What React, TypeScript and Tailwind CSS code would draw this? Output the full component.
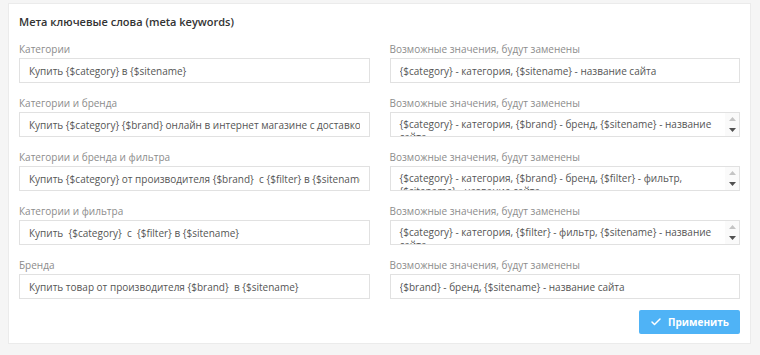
import React from 'react';
import { Check } from 'lucide-react';

type Row = {
  label: string;
  value: string;
  hint: string;
  multi?: boolean;
};

const rows: Row[] = [
  {
    label: 'Категории',
    value: 'Купить {$category} в {$sitename}',
    hint: '{$category} - категория, {$sitename} - название сайта',
  },
  {
    label: 'Категории и бренда',
    value: 'Купить {$category} {$brand} онлайн в интернет магазине с доставкой по {$sitename}',
    hint: '{$category} - категория, {$brand} - бренд, {$sitename} - название сайта',
    multi: true,
  },
  {
    label: 'Категории и бренда и фильтра',
    value: 'Купить {$category} от производителя {$brand}  с {$filter} в {$sitename}',
    hint: '{$category} - категория, {$brand} - бренд, {$filter} - фильтр, {$sitename} - название сайта',
    multi: true,
  },
  {
    label: 'Категории и фильтра',
    value: 'Купить  {$category}  с  {$filter} в {$sitename}',
    hint: '{$category} - категория, {$filter} - фильтр, {$sitename} - название сайта',
    multi: true,
  },
  {
    label: 'Бренда',
    value: 'Купить товар от производителя {$brand}  в {$sitename}',
    hint: '{$brand} - бренд, {$sitename} - название сайта',
  },
];

const HintField = ({ text, multi }: { text: string; multi?: boolean }) => {
  if (!multi) {
    return (
      <input
        readOnly
        value={text}
        className="block w-full h-[25px] px-[9px] border border-[#e1e1e1] bg-white text-[10px] text-[#555] outline-none"
      />
    );
  }
  return (
    <div className="relative h-[25px] border border-[#e1e1e1] bg-white overflow-hidden">
      <textarea
        readOnly
        value={text}
        className="block w-full h-full resize-none overflow-hidden pl-[9px] pr-[22px] pt-[5px] text-[10px] leading-[13px] text-[#555] outline-none bg-transparent"
      />
      {/* fake scrollbar arrows */}
      <div className="absolute right-0 top-0 bottom-0 w-[14px] bg-[#fafafa] flex flex-col items-center justify-between py-[4px]">
        <svg width="7" height="4" viewBox="0 0 7 4"><path d="M0 4 L3.5 0 L7 4 Z" fill="#c4c4c4" /></svg>
        <svg width="7" height="4" viewBox="0 0 7 4"><path d="M0 0 L3.5 4 L7 0 Z" fill="#505050" /></svg>
      </div>
    </div>
  );
};

const App = () => {
  return (
    <div className="w-[760px] h-[355px] bg-[#f5f5f5] pt-[3px] pl-[8px]" style={{ fontFamily: '"Open Sans", sans-serif' }}>
      <div className="w-[743px] h-[341px] bg-white border border-[#ebebeb] px-[10px] pt-[9px]">
        <h3 className="text-[11px] leading-[18px] font-semibold text-[#333] mb-[10px]">Мета ключевые слова (meta keywords)</h3>

        <div className="grid grid-cols-2 gap-x-[20px]">
          {rows.map((r) => (
            <React.Fragment key={r.label}>
              <div className="mb-[12px]">
                <label className="block text-[10px] leading-[16px] text-[#8c8c8c] mb-[1px]">{r.label}</label>
                <input
                  readOnly
                  value={r.value}
                  className="block w-full h-[25px] px-[9px] border border-[#e1e1e1] bg-white text-[10px] text-[#555] outline-none"
                />
              </div>
              <div className="mb-[12px]">
                <label className="block text-[10px] leading-[16px] text-[#8c8c8c] mb-[1px]">Возможные значения, будут заменены</label>
                <HintField text={r.hint} multi={r.multi} />
              </div>
            </React.Fragment>
          ))}
        </div>

        <div className="flex justify-end -mt-[1px]">
          <button className="flex items-center justify-center gap-[6px] w-[101px] h-[24px] rounded-[2px] bg-[#4fb3f6] text-white text-[10px] font-bold">
            <Check size={12} strokeWidth={3} />
            Применить
          </button>
        </div>
      </div>
    </div>
  );
};

export default App;
